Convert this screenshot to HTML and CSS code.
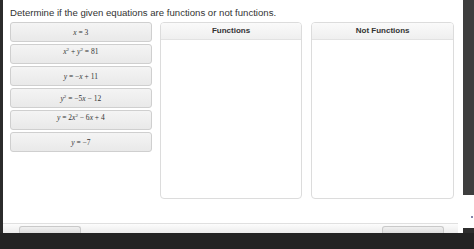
FILE: index.html
```html
<!DOCTYPE html>
<html lang="en">
<head>
    <meta charset="UTF-8">
    <meta name="viewport" content="width=device-width, initial-scale=1.0">
    <title>Functions or Not Functions</title>
    <link rel="stylesheet" href="styles.css">
</head>
<body>

    <div class="screen">
        <div class="edge-left"></div>

        <div class="panel">
            <p class="prompt">Determine if the given equations are functions or not functions.</p>

            <div class="workspace">
                <!-- Draggable equation tiles -->
                <div class="tiles">
                    <div class="tile"><span><i>x</i> = 3</span></div>
                    <div class="tile tile-top"><span><i>x</i><sup>2</sup> + <i>y</i><sup>2</sup> = 81</span></div>
                    <div class="tile"><span><i>y</i> = &minus;<i>x</i> + 11</span></div>
                    <div class="tile"><span><i>y</i><sup>2</sup> = &minus;5<i>x</i> &minus; 12</span></div>
                    <div class="tile tile-top"><span><i>y</i> = 2<i>x</i><sup>2</sup> &minus; 6<i>x</i> + 4</span></div>
                    <div class="tile"><span><i>y</i> = &minus;7</span></div>
                </div>

                <!-- Drop targets -->
                <div class="bin">
                    <div class="bin-head">Functions</div>
                </div>
                <div class="bin">
                    <div class="bin-head">Not Functions</div>
                </div>
            </div>

            <div class="footer">
                <div class="footer-btn"></div>
                <div class="footer-btn"></div>
            </div>
        </div>

        <div class="edge-right">
            <div class="edge-dark"></div>
            <div class="edge-gap"><span class="edge-dot"></span></div>
            <div class="edge-dark small"></div>
        </div>
    </div>

</body>
</html>
```

FILE: styles.css
```css
/* Matching activity page */
body {
    margin: 0;
    background-color: #232323;
    font-family: 'Liberation Sans', Arial, sans-serif;
    color: #333;
    width: 474px;
    height: 249px;
    overflow: hidden;
}

.screen {
    display: flex;
    height: 233px;
}

.edge-left {
    width: 3px;
    background-color: #2b2b2b;
}

.panel {
    width: 460px;
    background-color: #fff;
    display: flex;
    flex-direction: column;
}

.prompt {
    margin: 7px 0 0 7px;
    font-size: 9.6px;
    line-height: 12px;
    color: #333;
}

.workspace {
    display: flex;
    align-items: flex-start;
    margin: 3px 0 0 7px;
}

/* Equation tiles */
.tiles {
    width: 142px;
    display: flex;
    flex-direction: column;
    gap: 2px;
    margin-right: 8px;
}

.tile {
    height: 20px;
    box-sizing: border-box;
    border: 1px solid #cfcfcf;
    border-radius: 3px;
    background: linear-gradient(#f4f4f4, #e9e9e9);
    display: flex;
    justify-content: center;
    align-items: center;
    font-family: 'Liberation Serif', 'Times New Roman', serif;
    font-size: 7.5px;
    color: #333;
}

.tile-top {
    align-items: flex-start;
    padding-top: 2px;
}

.tile sup {
    font-size: 5px;
    line-height: 0;
}

/* Drop bins */
.bin {
    width: 143px;
    height: 177px;
    box-sizing: border-box;
    border: 1px solid #dcdcdc;
    border-radius: 4px;
    margin-right: 9px;
    background-color: #fff;
    overflow: hidden;
}

.bin-head {
    height: 16px;
    border-bottom: 1px solid #e2e2e2;
    background: linear-gradient(#fafafa, #efefef);
    text-align: center;
    font-size: 8px;
    line-height: 16px;
    font-weight: bold;
    color: #333;
}

/* Bottom toolbar */
.footer {
    margin-top: auto;
    height: 9px;
    border-top: 1px solid #e0e0e0;
    background: linear-gradient(#fcfcfc, #ececec);
    display: flex;
    justify-content: space-between;
    align-items: flex-end;
    padding: 0 14px 0 16px;
    margin-right: 5px;
}

.footer-btn {
    width: 60px;
    height: 6px;
    border: 1px solid #c9c9c9;
    border-bottom: none;
    border-radius: 3px 3px 0 0;
    background: linear-gradient(#f0f0f0, #dcdcdc);
}

.edge-right {
    width: 11px;
    display: flex;
    flex-direction: column;
}

.edge-dark {
    height: 195px;
    background-color: #3e3e3e;
}

.edge-dark.small {
    height: 5px;
    background-color: #2e2e2e;
}

.edge-gap {
    flex: 1;
    background-color: #fff;
    position: relative;
}

.edge-dot {
    position: absolute;
    top: 21px;
    right: 1px;
    width: 2px;
    height: 2px;
    border-radius: 1px;
    background-color: #5a5a8a;
}
```
